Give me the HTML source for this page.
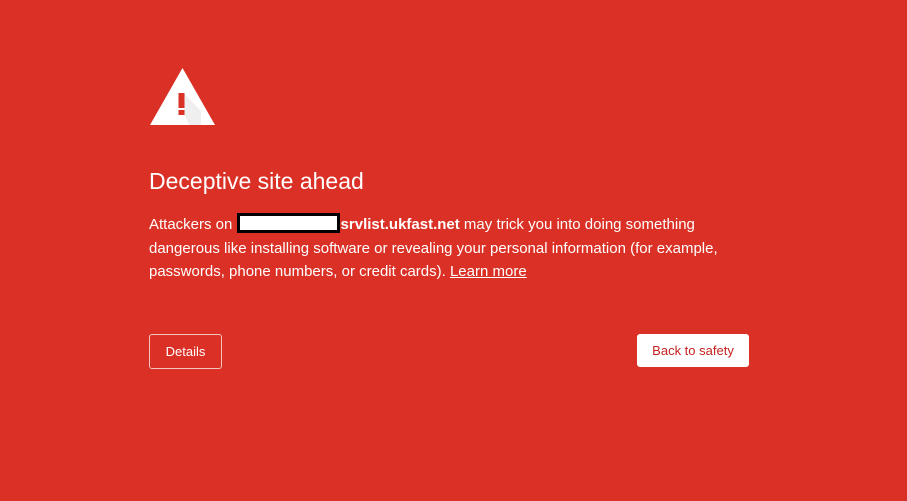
<!DOCTYPE html>
<html><head><meta charset="utf-8"><style>
html,body{margin:0;padding:0;width:907px;height:501px;background:#da3025;overflow:hidden;font-family:"Liberation Sans",sans-serif;color:#fff}
.tri{position:absolute;left:149px;top:67px}
h1{position:absolute;left:149px;top:168px;margin:0;font-size:23px;font-weight:normal;letter-spacing:0px}
p{position:absolute;left:149px;top:213px;width:620px;margin:0;font-size:15px;line-height:23.5px}
.red{display:inline-block;width:97px;height:14px;background:#fff;border:3px solid #000;vertical-align:-4px;margin-right:1px}
a{color:#fff;text-decoration:underline}
.btn{position:absolute;box-sizing:border-box;font-size:13px;text-align:center;border-radius:3px}
.d{left:149px;top:334px;width:73px;height:35px;border:1px solid #f3c3c0;line-height:34px}
.b{left:637px;top:334px;width:112px;height:33px;background:#fff;color:#c5221f;line-height:34px}
</style></head><body>
<svg class="tri" width="67" height="59" viewBox="0 0 67 59">
<polygon points="33.5,1 66,58 1,58" fill="#fff"/>
<polygon points="35.5,27 52,44 52,58 40,58 35.5,48" fill="#e8e8e8" opacity="0.7"/>
<rect x="29.5" y="26" width="6" height="15" fill="#da3025"/>
<rect x="29.5" y="43" width="6" height="5" fill="#da3025"/>
</svg>
<h1>Deceptive site ahead</h1>
<p>Attackers on <span class="red"></span><b>srvlist.ukfast.net</b> may trick you into doing something dangerous like installing software or revealing your personal information (for example, passwords, phone numbers, or credit cards). <a>Learn more</a></p>
<div class="btn d">Details</div>
<div class="btn b">Back to safety</div>
</body></html>
